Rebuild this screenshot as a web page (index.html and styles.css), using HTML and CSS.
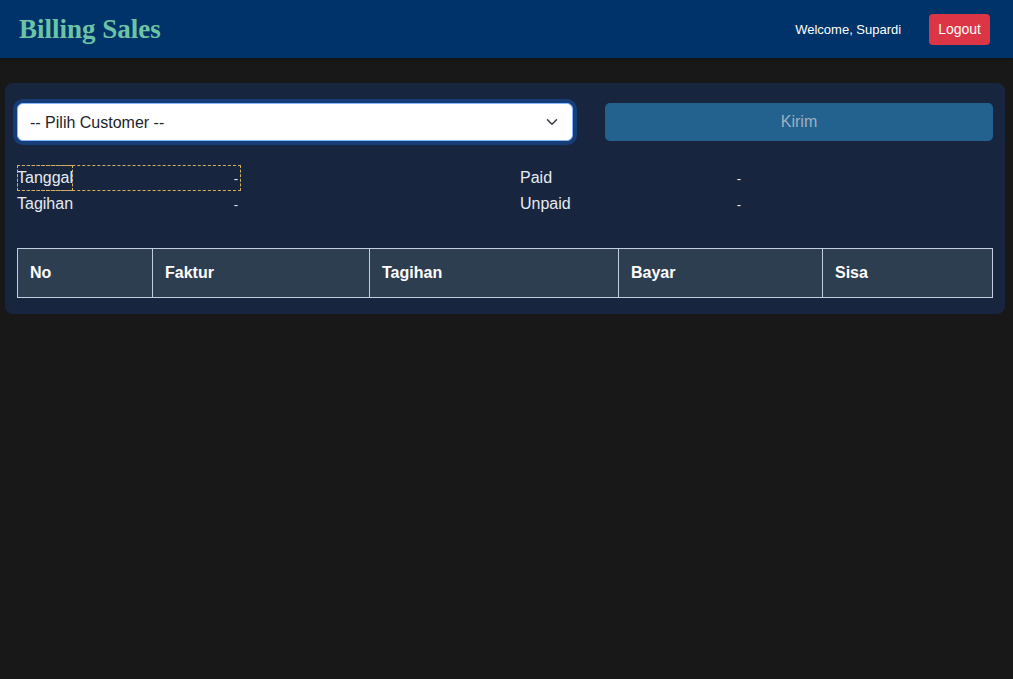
FILE: index.html
```html
<!DOCTYPE html>
<html lang="id">
<head>
  <meta charset="UTF-8">
  <meta name="viewport" content="width=device-width, initial-scale=1.0">
  <title>Billing Sales</title>
  <link rel="stylesheet" href="styles.css">
</head>
<body>
  <nav class="navbar">
    <h1 class="brand">Billing Sales</h1>
    <div class="user">
      <span class="welcome">Welcome, Supardi</span>
      <button class="btn-logout">Logout</button>
    </div>
  </nav>

  <div class="card">
    <div class="toolbar">
      <div class="select-wrap">
        <select class="customer-select">
          <option>-- Pilih Customer --</option>
        </select>
        <svg class="chevron" width="12" height="12" viewBox="0 0 16 16" fill="none" stroke="#343a40" stroke-width="2" stroke-linecap="round" stroke-linejoin="round">
          <path d="M2 5l6 6 6-6"/>
        </svg>
      </div>
      <button class="btn-kirim">Kirim</button>
    </div>

    <div class="summary">
      <table class="info">
        <tr class="active">
          <td class="label">Tanggal</td>
          <td class="value">-</td>
        </tr>
        <tr>
          <td class="label">Tagihan</td>
          <td class="value">-</td>
        </tr>
      </table>
      <table class="info">
        <tr>
          <td class="label">Paid</td>
          <td class="value">-</td>
        </tr>
        <tr>
          <td class="label">Unpaid</td>
          <td class="value">-</td>
        </tr>
      </table>
    </div>

    <table class="billing">
      <thead>
        <tr>
          <th class="col-no">No</th>
          <th class="col-faktur">Faktur</th>
          <th class="col-tagihan">Tagihan</th>
          <th class="col-bayar">Bayar</th>
          <th class="col-sisa">Sisa</th>
        </tr>
      </thead>
      <tbody></tbody>
    </table>
  </div>
</body>
</html>
```

FILE: styles.css
```css
body {
  font-family: "Liberation Sans", Arial, sans-serif;
  margin: 0;
  background: #181818;
  color: #e6ebf2;
}
.navbar {
  height: 58px;
  display: flex;
  align-items: center;
  justify-content: space-between;
  padding: 0 23px 0 19px;
  background: #00336a;
  box-shadow: 0 1px 3px rgba(0, 0, 0, 0.4);
}
.brand {
  margin: 0;
  font-family: "Liberation Serif", "Times New Roman", serif;
  font-size: 27px;
  font-weight: bold;
  color: #6cc4a4;
}
.user {
  display: flex;
  align-items: center;
  gap: 28px;
}
.welcome {
  font-size: 13px;
  color: #fff;
}
.btn-logout {
  height: 31px;
  padding: 0 9px;
  border: none;
  border-radius: 4px;
  background: #dc3545;
  color: #fff;
  font-family: inherit;
  font-size: 14px;
}
.card {
  margin: 25px 8px 0 5px;
  padding: 20px 12px 16px;
  background: #18253e;
  border-radius: 8px;
}
.toolbar {
  display: grid;
  grid-template-columns: 1fr 388px;
  gap: 32px;
  align-items: center;
}
.select-wrap {
  position: relative;
}
.customer-select {
  width: 100%;
  height: 38px;
  padding: 0 36px 0 12px;
  border: 1px solid #86b7fe;
  border-radius: 6px;
  background: #fff;
  color: #212529;
  font-family: inherit;
  font-size: 16px;
  box-shadow: 0 0 0 4px #173d79;
  outline: none;
  appearance: none;
  -webkit-appearance: none;
}
.chevron {
  position: absolute;
  right: 15px;
  top: 13px;
  pointer-events: none;
}
.btn-kirim {
  height: 38px;
  border: none;
  border-radius: 5px;
  background: #23628f;
  color: #9fb0c1;
  font-family: inherit;
  font-size: 16px;
}
.summary {
  display: grid;
  grid-template-columns: 1fr 1fr;
  gap: 30px;
  margin-top: 24px;
}
.info {
  width: 224px;
  border-collapse: collapse;
  font-size: 16px;
}
.info td {
  height: 26px;
  padding: 0;
}
.info .value {
  text-align: right;
  font-size: 13px;
  padding-right: 3px;
}
.info .active {
  outline: 1px dashed #d3b060;
  outline-offset: -1px;
}
.info .active .label {
  width: 56px;
  outline: 1px dashed #d3b060;
  outline-offset: -1px;
}
.billing {
  width: 100%;
  margin-top: 31px;
  border-collapse: collapse;
}
.billing th {
  height: 48px;
  padding: 0 12px;
  border: 1px solid #c3cde0;
  background: #2e3e51;
  color: #fff;
  font-size: 16px;
  text-align: left;
}
.col-no { width: 110px; }
.col-faktur { width: 192px; }
.col-tagihan { width: 224px; }
.col-bayar { width: 179px; }
```
